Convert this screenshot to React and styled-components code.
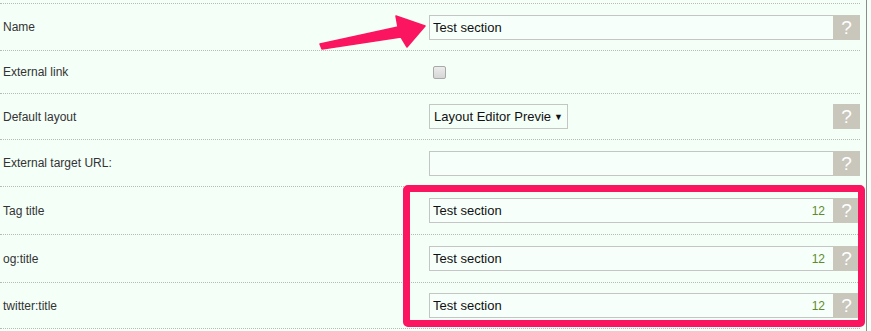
import React from "react";
import styled, { createGlobalStyle } from "styled-components";

const GlobalStyle = createGlobalStyle`
  html, body {
    margin: 0;
    padding: 0;
    background: #f4fff8;
  }
  body {
    font-family: "Liberation Sans", Arial, sans-serif;
  }
`;

const Page = styled.div`
  position: relative;
  width: 867px;
  height: 331px;
  padding-top: 3px;
  box-sizing: border-box;
  border-right: 1px solid #8c8c8c;
  background: #f4fff8;
  overflow: hidden;
`;

const Form = styled.div`
  width: 860px;
  border-top: 1px dotted #b9b9b9;
`;

const Row = styled.div`
  display: grid;
  grid-template-columns: 429px 1fr;
  align-items: center;
  height: ${props => props.height || 46}px;
  border-bottom: 1px dotted #b9b9b9;
`;

const Label = styled.div`
  padding-left: 3px;
  font-size: 12px;
  color: #333;
`;

const Field = styled.div`
  display: flex;
  align-items: center;
  height: 25px;
`;

const InputBox = styled.div`
  flex: 1;
  display: flex;
  align-items: center;
  height: 25px;
  box-sizing: border-box;
  border: 1px solid #c5c5c5;
  border-right: none;
  background: #f6fffa;
`;

const TextInput = styled.input`
  flex: 1;
  min-width: 0;
  border: none;
  outline: none;
  background: transparent;
  padding: 0 0 0 3px;
  height: 23px;
  font-family: "Liberation Sans", Arial, sans-serif;
  font-size: 13px;
  color: #111;
`;

const Counter = styled.span`
  padding-right: 8px;
  font-size: 12px;
  color: #5e8a2a;
`;

const Help = styled.div`
  width: 27px;
  height: 25px;
  margin-left: auto;
  display: flex;
  align-items: center;
  justify-content: center;
  background: #c9c6bc;
  color: #fff;
  font-size: 19px;
  line-height: 1;
`;

const Checkbox = styled.span`
  display: block;
  width: 11px;
  height: 11px;
  margin-left: 4px;
  border: 1px solid #a9a9a9;
  border-radius: 2px;
  background: linear-gradient(#ececec, #d6d6d6);
`;

const Select = styled.div`
  width: 139px;
  height: 25px;
  box-sizing: border-box;
  display: flex;
  align-items: center;
  border: 1px solid #c5c5c5;
  padding: 0 4px;
  font-size: 13px;
  color: #111;
  white-space: nowrap;
`;

const SelectText = styled.span`
  width: 117px;
  overflow: hidden;
`;

const Caret = styled.span`
  font-size: 9px;
  margin-left: 3px;
`;

const Frame = styled.div`
  position: absolute;
  left: 403px;
  top: 185px;
  width: 462px;
  height: 142px;
  box-sizing: border-box;
  border: 7px solid #fb1560;
  border-radius: 5px;
  pointer-events: none;
`;

const Arrow = styled.svg`
  position: absolute;
  left: 0;
  top: 0;
  pointer-events: none;
`;

const TextField = ({ value = "", count }) => (
  <Field>
    <InputBox>
      <TextInput defaultValue={value} />
      {count !== undefined && <Counter>{count}</Counter>}
    </InputBox>
    <Help>?</Help>
  </Field>
);

export default function App() {
  return (
    <>
      <GlobalStyle />
      <Page>
        <Form>
          <Row height={46}>
            <Label>Name</Label>
            <TextField value="Test section" />
          </Row>
          <Row height={42}>
            <Label>External link</Label>
            <Field>
              <Checkbox />
            </Field>
          </Row>
          <Row height={45}>
            <Label>Default layout</Label>
            <Field>
              <Select>
                <SelectText>Layout Editor Preview</SelectText>
                <Caret>▼</Caret>
              </Select>
              <Help>?</Help>
            </Field>
          </Row>
          <Row height={46}>
            <Label>External target URL:</Label>
            <TextField />
          </Row>
          <Row height={47}>
            <Label>Tag title</Label>
            <TextField value="Test section" count={12} />
          </Row>
          <Row height={47}>
            <Label>og:title</Label>
            <TextField value="Test section" count={12} />
          </Row>
          <Row height={45}>
            <Label>twitter:title</Label>
            <TextField value="Test section" count={12} />
          </Row>
        </Form>
        <Frame />
        <Arrow width="440" height="60" viewBox="0 0 440 60">
          <polygon
            points="320,44 398,27 396,16 425,26 407,47 401,37 322,49"
            fill="#fb1560"
            stroke="#fb1560"
            strokeWidth="1.5"
            strokeLinejoin="round"
          />
        </Arrow>
      </Page>
    </>
  );
}
